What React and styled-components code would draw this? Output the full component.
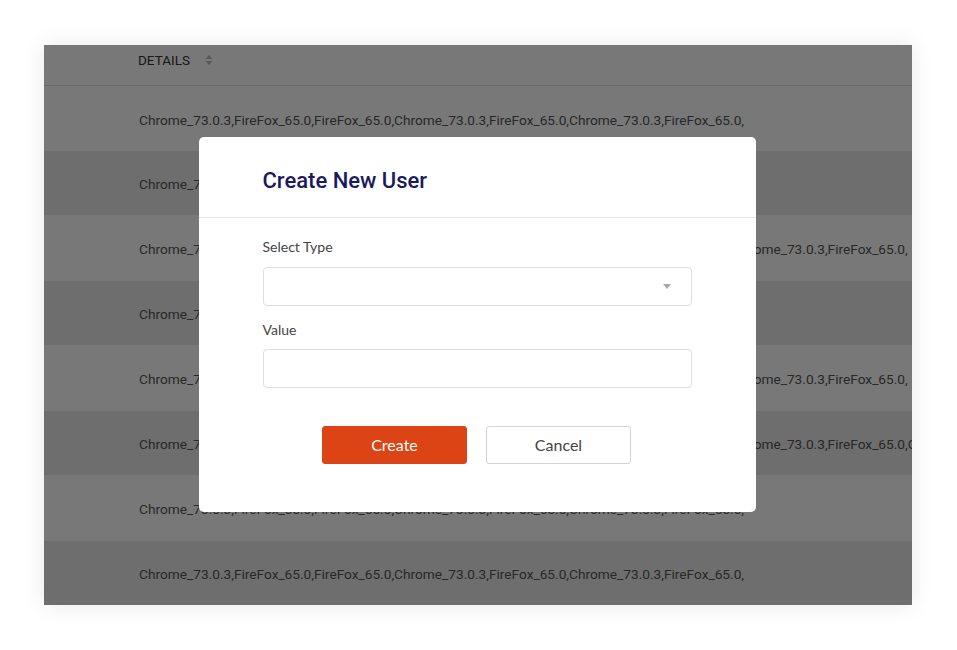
import React from 'react';
import styled, { createGlobalStyle } from 'styled-components';

const GlobalStyle = createGlobalStyle`
  body {
    margin: 0;
    background: #ffffff;
    font-family: Roboto, "Liberation Sans", sans-serif;
  }
`;

const Page = styled.div`
  padding: 45px 45px 45px 44px;
  width: 957px;
  height: 650px;
  box-sizing: border-box;
`;

const Panel = styled.div`
  position: relative;
  width: 868px;
  height: 560px;
  background: #ffffff;
  box-shadow: 0 0 22px rgba(0, 0, 0, 0.09);
  overflow: hidden;
`;

const Table = styled.div`
  display: flex;
  flex-direction: column;
`;

const HeadRow = styled.div`
  display: flex;
  align-items: center;
  height: 41px;
  padding: 0 0 11px 94px;
  box-sizing: border-box;
  border-bottom: 1px solid #dcdcdc;
  font-size: 13.5px;
  color: #333;
  text-transform: uppercase;
`;

const SortIcon = styled.svg`
  margin-left: 15px;
  width: 8px;
  height: 12px;
`;

const Row = styled.div`
  display: flex;
  align-items: center;
  height: ${(p) => p.h}px;
  padding: 2px 0 0 95px;
  box-sizing: border-box;
  background: ${(p) => (p.alt ? '#e9e9e9' : '#ffffff')};
  font-size: 13.7px;
  color: #565656;
  white-space: nowrap;
  overflow: hidden;
`;

const Backdrop = styled.div`
  position: absolute;
  inset: 0;
  background: rgba(0, 0, 0, 0.53);
  display: flex;
  align-items: center;
  justify-content: center;
  padding: 0 2px 2px 0;
`;

const Modal = styled.div`
  width: 557px;
  height: 375px;
  background: #ffffff;
  border-radius: 5px;
  display: flex;
  flex-direction: column;
`;

const ModalHead = styled.div`
  height: 81px;
  display: flex;
  align-items: center;
  padding: 8px 64px 0;
  box-sizing: border-box;
  border-bottom: 1px solid #e4e4e4;
`;

const Title = styled.h2`
  margin: 0;
  font-family: Roboto, "Liberation Sans", sans-serif;
  font-weight: 500;
  font-size: 22px;
  color: #1b1a5e;
`;

const ModalBody = styled.div`
  padding: 20px 64px 0;
  display: flex;
  flex-direction: column;
`;

const Label = styled.label`
  font-family: Lato, "Liberation Sans", sans-serif;
  font-size: 14px;
  line-height: 18px;
  color: #444;
  margin-top: ${(p) => p.mt || 0}px;
`;

const Select = styled.div`
  height: 39px;
  margin-top: ${(p) => p.mt}px;
  border: 1px solid #dedede;
  border-radius: 4px;
  box-sizing: border-box;
  display: flex;
  align-items: center;
  justify-content: flex-end;
  padding-right: 20px;
`;

const Caret = styled.span`
  width: 0;
  height: 0;
  border-left: 4px solid transparent;
  border-right: 4px solid transparent;
  border-top: 5px solid #a8a8a8;
`;

const Input = styled.input`
  height: 39px;
  margin-top: ${(p) => p.mt}px;
  border: 1px solid #dedede;
  border-radius: 4px;
  box-sizing: border-box;
  outline: none;
  padding: 0 12px;
`;

const Actions = styled.div`
  display: flex;
  justify-content: center;
  gap: 19px;
  margin-top: 38px;
  padding-right: 1px;
`;

const Button = styled.button`
  width: 145px;
  height: 38px;
  border-radius: 3px;
  font-family: Lato, "Liberation Sans", sans-serif;
  font-size: 16px;
  cursor: pointer;
  background: ${(p) => (p.primary ? '#dc4315' : '#ffffff')};
  color: ${(p) => (p.primary ? '#ffffff' : '#444')};
  border: 1px solid ${(p) => (p.primary ? '#dc4315' : '#d4d4d4')};
`;

const base = 'Chrome_73.0.3,FireFox_65.0,FireFox_65.0,Chrome_73.0.3,FireFox_65.0,Chrome_73.0.3,FireFox_65.0,';
const longer = 'Chrome_73.0.3,FireFox_65.0,FireFox_65.0,Chrome_73.0,FireFox_65.0,Chrome_73.0.3,FireFox_65.0,Chrome_73.0.3,FireFox_65.0,';
const longest = longer + 'Chrome_73.0.3,FireFox_65.0,';

const rows = [
  { text: base, h: 65 },
  { text: base, h: 64 },
  { text: longer, h: 66 },
  { text: base, h: 64 },
  { text: longer, h: 66 },
  { text: longest, h: 64 },
  { text: base, h: 66 },
  { text: base, h: 64 },
];

export default function App() {
  return (
    <>
      <GlobalStyle />
      <Page>
        <Panel>
          <Table>
            <HeadRow>
              Details
              <SortIcon viewBox="0 0 8 12">
                <path d="M4 1 L7.5 5 H0.5 Z" fill="#bdbdbd" />
                <path d="M4 11 L7.5 7 H0.5 Z" fill="#bdbdbd" />
              </SortIcon>
            </HeadRow>
            {rows.map((r, i) => (
              <Row key={i} h={r.h} alt={i % 2 === 1}>
                {r.text}
              </Row>
            ))}
          </Table>
          <Backdrop>
            <Modal>
              <ModalHead>
                <Title>Create New User</Title>
              </ModalHead>
              <ModalBody>
                <Label>Select Type</Label>
                <Select mt={11}>
                  <Caret />
                </Select>
                <Label mt={15}>Value</Label>
                <Input mt={10} />
                <Actions>
                  <Button primary>Create</Button>
                  <Button>Cancel</Button>
                </Actions>
              </ModalBody>
            </Modal>
          </Backdrop>
        </Panel>
      </Page>
    </>
  );
}
